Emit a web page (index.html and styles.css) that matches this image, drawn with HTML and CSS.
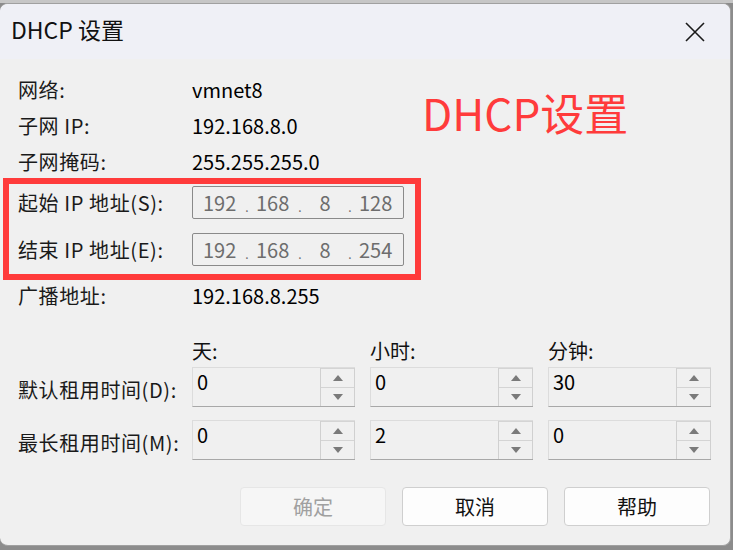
FILE: index.html
```html
<!DOCTYPE html>
<html lang="zh-CN">
<head>
<meta charset="utf-8">
<title>DHCP 设置</title>
<link rel="stylesheet" href="styles.css">
</head>
<body>
<div class="backdrop-top"></div>
<div class="dialog">
  <div class="titlebar">
    <span class="title">DHCP 设置</span>
    <svg class="close" width="20" height="20" viewBox="0 0 20 20"><path d="M1 1 L19 19 M19 1 L1 19" stroke="#1a1a1a" stroke-width="1.6" fill="none"/></svg>
  </div>
  <div class="body">
    <div class="info">
      <div class="lbl">网络:</div><div class="val">vmnet8</div>
      <div class="lbl">子网 IP:</div><div class="val">192.168.8.0</div>
      <div class="lbl">子网掩码:</div><div class="val">255.255.255.0</div>
      <div class="lbl">起始 IP 地址(S):</div>
      <div class="val"><div class="ip"><span class="oct">192</span><span class="dot">.</span><span class="oct">168</span><span class="dot">.</span><span class="oct c">8</span><span class="dot">.</span><span class="oct">128</span></div></div>
      <div class="lbl">结束 IP 地址(E):</div>
      <div class="val"><div class="ip"><span class="oct">192</span><span class="dot">.</span><span class="oct">168</span><span class="dot">.</span><span class="oct c">8</span><span class="dot">.</span><span class="oct">254</span></div></div>
      <div class="lbl">广播地址:</div><div class="val">192.168.8.255</div>
    </div>
    <div class="lease">
      <div></div><div class="head">天:</div><div class="head">小时:</div><div class="head">分钟:</div>
      <div class="lbl rl">默认租用时间(D):</div>
      <div class="spin"><div class="num">0</div><div class="arrows"><div class="btn"><span class="up"></span></div><div class="btn"><span class="down"></span></div></div></div>
      <div class="spin"><div class="num">0</div><div class="arrows"><div class="btn"><span class="up"></span></div><div class="btn"><span class="down"></span></div></div></div>
      <div class="spin"><div class="num">30</div><div class="arrows"><div class="btn"><span class="up"></span></div><div class="btn"><span class="down"></span></div></div></div>
      <div class="lbl rl r3">最长租用时间(M):</div>
      <div class="spin r3"><div class="num">0</div><div class="arrows"><div class="btn"><span class="up"></span></div><div class="btn"><span class="down"></span></div></div></div>
      <div class="spin r3"><div class="num">2</div><div class="arrows"><div class="btn"><span class="up"></span></div><div class="btn"><span class="down"></span></div></div></div>
      <div class="spin r3"><div class="num">0</div><div class="arrows"><div class="btn"><span class="up"></span></div><div class="btn"><span class="down"></span></div></div></div>
    </div>
    <div class="buttons">
      <button class="b disabled">确定</button>
      <button class="b">取消</button>
      <button class="b">帮助</button>
    </div>
  </div>
  <div class="mark"></div>
  <div class="note">DHCP设置</div>
</div>
</body>
</html>
```
FILE: styles.css
```css
html, body {
  margin: 0;
  padding: 0;
}
body {
  width: 733px;
  height: 550px;
  overflow: hidden;
  background: #8c8c8c;
  font-family: "Noto Sans CJK SC", "Noto Sans", sans-serif;
  position: relative;
}
.backdrop-top {
  height: 3px;
  background: #c6c6c6;
}
.dialog {
  position: relative;
  width: 730px;
  height: 541px;
  background: #f0f0f0;
  border: 1px solid #a0a0a0;
  border-left: none;
  border-radius: 8px;
  overflow: hidden;
  display: flex;
  flex-direction: column;
}
.titlebar {
  height: 55px;
  flex: none;
  background: #eff0f6;
  display: flex;
  align-items: center;
  justify-content: space-between;
  padding: 0 25px 0 11px;
}
.title {
  font-size: 23px;
  color: #111;
  line-height: 1;
  margin-top: -5px;
}
.close {
  display: block;
}
.body {
  padding: 12px 20px 0 18px;
  font-size: 20px;
  color: #111;
}
.info {
  display: grid;
  grid-template-columns: 174px 1fr;
  grid-template-rows: 36px 36px 36px 47px 47px 44px;
  align-items: center;
}
.lbl {
  white-space: nowrap;
  color: #1a1a1a;
  letter-spacing: 0.6px;
}
.val {
  color: #000;
}
.ip {
  width: 212px;
  height: 33px;
  border: 1px solid #8a8a8a;
  border-radius: 2px;
  box-sizing: border-box;
  background: #f0f0f0;
  display: flex;
  align-items: center;
  color: #6d6d6d;
  padding-left: 10px;
}
.oct {
  width: 35px;
  text-align: left;
}
.oct.c {
  width: 32px;
  text-align: center;
}
.dot {
  width: 18px;
  text-align: center;
  font-size: 12px;
  padding-top: 8px;
}
.lease {
  margin-top: 18px;
  display: grid;
  grid-template-columns: 159px 163px 163px 163px;
  grid-template-rows: 32px 40px 53px;
  column-gap: 15px;
  align-items: center;
}
.lease .head {
  padding-bottom: 2px;
}
.rl {
  height: 40px;
  display: flex;
  align-items: center;
  padding-top: 4px;
  box-sizing: border-box;
}
.r3 {
  align-self: end;
}
.spin {
  height: 40px;
  box-sizing: border-box;
  display: flex;
  border-top: 1px solid #dcdcdc;
  border-left: 1px solid #dcdcdc;
  border-bottom: 1px solid #a8a8a8;
  background: #f0f0f0;
}
.num {
  flex: 1;
  color: #000;
  padding: 0 0 0 4px;
  line-height: 28px;
}
.arrows {
  width: 33px;
  display: flex;
  flex-direction: column;
  border-left: 1px solid #d0d0d0;
  border-right: 1px solid #d0d0d0;
}
.btn {
  flex: 1;
  display: flex;
  align-items: center;
  justify-content: center;
  border-top: 1px solid #d4d4d4;
}
.up {
  width: 0;
  height: 0;
  border-left: 5px solid transparent;
  border-right: 5px solid transparent;
  border-bottom: 6px solid #7a7a7a;
}
.down {
  width: 0;
  height: 0;
  border-left: 5px solid transparent;
  border-right: 5px solid transparent;
  border-top: 6px solid #7a7a7a;
}
.buttons {
  display: flex;
  justify-content: flex-end;
  gap: 16px;
  margin-top: 27px;
}
.b {
  width: 146px;
  height: 39px;
  background: #fdfdfd;
  border: 1px solid #cfcfcf;
  border-radius: 4px;
  font-family: "Noto Sans CJK SC", "Noto Sans", sans-serif;
  font-size: 20px;
  color: #111;
  padding: 0;
}
.b.disabled {
  background: #f6f6f6;
  border-color: #e6e6e6;
  color: #a0a0a0;
}
.mark {
  position: absolute;
  left: 3px;
  top: 174px;
  width: 418px;
  height: 102px;
  border: 6px solid #ff3b3b;
  box-sizing: border-box;
}
.note {
  position: absolute;
  left: 422px;
  top: 80px;
  font-size: 44px;
  line-height: 56px;
  color: #ff3b3b;
}
```
